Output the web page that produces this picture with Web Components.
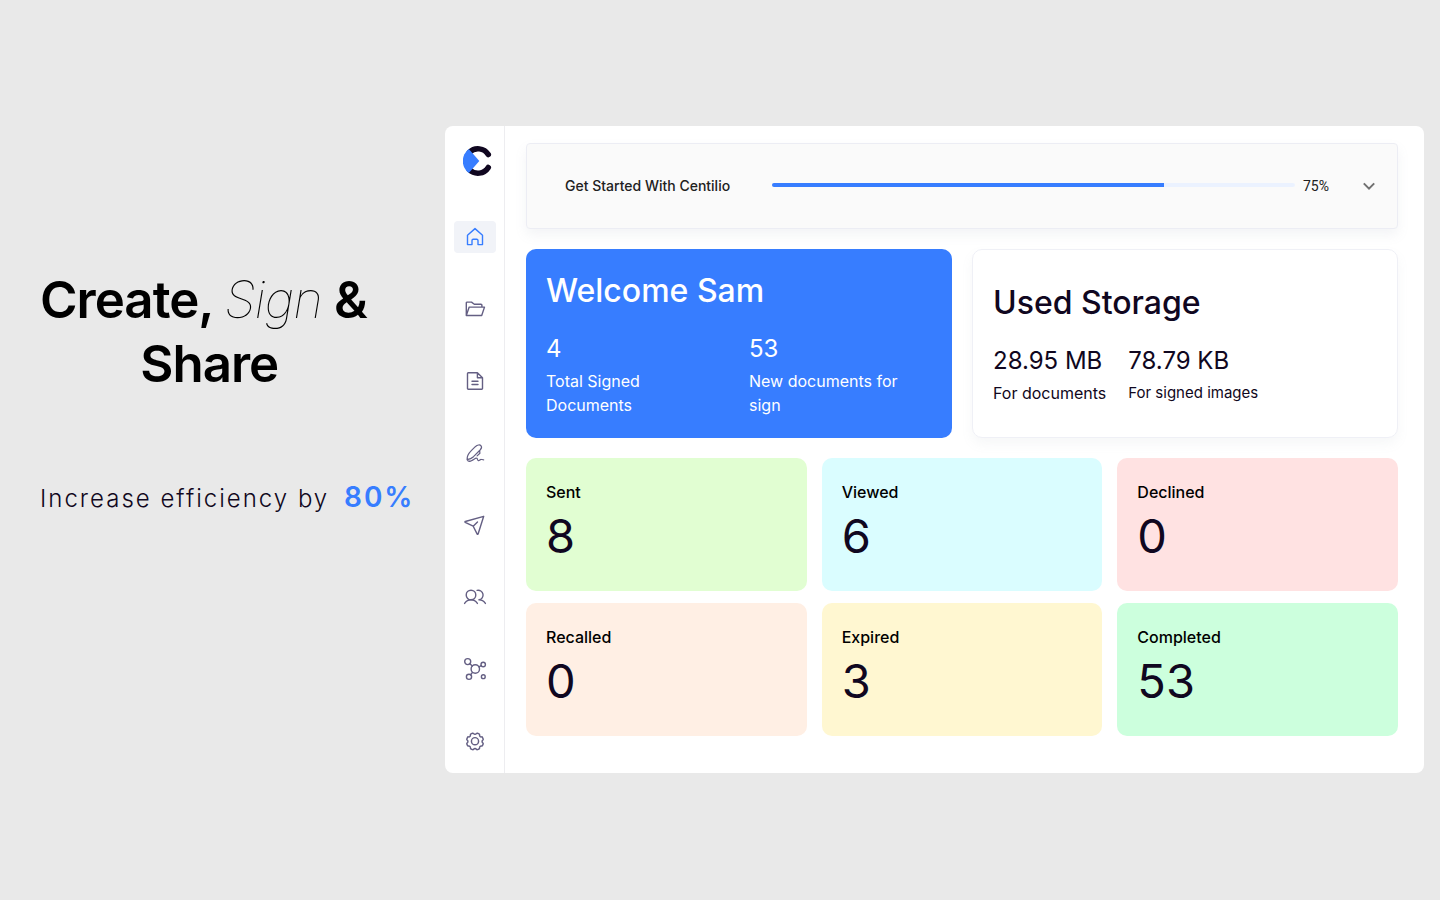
<!DOCTYPE html>
<html lang="en">
<head>
<meta charset="utf-8">
<meta name="viewport" content="width=device-width, initial-scale=1">
<title>Centilio</title>
<style>
  html { min-height: 100%; background: #e9e9e9; }
  body { margin: 0; font-family: Inter, sans-serif; color: #100720; }
</style>
</head>
<body>
<promo-page>
  <promo-hero slot="hero"></promo-hero>
  <app-panel>
    <side-bar slot="side">
      <nav-link href="#home" label="Home" active>
        <svg width="24" height="24" viewBox="0 0 24 24"><path d="M4.500 10.200 12 3.600l7.500 6.600V19.600H15v-4.100a1.200 1.200 0 0 0-1.200-1.200h-3.600A1.200 1.200 0 0 0 9 15.500v4.100H4.500z"/></svg>
      </nav-link>
      <nav-link href="#folders" label="Folders">
        <svg width="24" height="24" viewBox="0 0 24 24"><path d="M3.300 18.500V6a.9.9 0 0 1 .9-.9h4.300L11.300 7.300h6.700a.9.900 0 0 1 .9.900v1.900M3.300 18.500l2.900-8.400h15.300l-2.800 8.400z"/></svg>
      </nav-link>
      <nav-link href="#documents" label="Documents">
        <svg width="24" height="24" viewBox="0 0 24 24"><path d="M14.400 3.700H5.300a.8.8 0 0 0-.8.8v15a.8.800 0 0 0 .8.800h13.400a.8.800 0 0 0 .8-.8V8.700zM14.400 3.700v5h5.100M9 12.300h6M9 15.500h6"/></svg>
      </nav-link>
      <nav-link href="#signatures" label="Signatures">
        <svg width="24" height="24" viewBox="0 0 24 24" style="stroke-width:1.200"><path d="M4.100 18.100c-.4-3.300 1.200-6 4.200-9l4-4c2.200-2 4.600-2.200 5.600-1.100s.8 2.700-.8 4.400l-6.600 6.700c-1.700 1.600-3.700 2.500-6.400 3zM16.700 9.300l.2 2.400-2.800 2.600M4.100 18.100c.9 1.600 2.800 1.900 4.800.8 1.900-1 3.600-2.500 4.700-2.300 1.300.2.500 2.100 1.700 2.400 1.300.3 1.700-1.400 2.900-1.300.8 0 1.200.5 2.500.5" transform="translate(0 .6)"/></svg>
      </nav-link>
      <nav-link href="#send" label="Send">
        <svg width="24" height="24" viewBox="0 0 24 24"><path d="M20.700 3.300 2.300 8.500a.5.500 0 0 0-.1.900l8 3.800 4 7.900a.5.500 0 0 0 .9-.1zM10.200 13.200l4.300-4.300"/></svg>
      </nav-link>
      <nav-link href="#contacts" label="Contacts">
        <svg width="24" height="24" viewBox="0 0 24 24"><circle cx="8" cy="10" r="4.800"/><path d="M1.600 18.400c1.500-2.200 3.600-3.600 6.400-3.600s4.900 1.400 6.400 3.600M14.100 5.400a4.800 4.800 0 1 1 1.900 9.400c2.800 0 4.900 1.400 6.400 3.600"/></svg>
      </nav-link>
      <nav-link href="#integrations" label="Integrations">
        <svg width="24" height="24" viewBox="0 0 24 24"><circle cx="12.300" cy="12" r="4.200"/><circle cx="4.700" cy="4.600" r="3"/><circle cx="6" cy="19.800" r="2.600"/><circle cx="20.200" cy="7.500" r="2.200"/><circle cx="20.300" cy="19.700" r="1.900"/><path d="m6.900 6.700 2.400 2.400M7.600 17.700l1.900-2.300M16 9.900l2.200-1.300"/></svg>
      </nav-link>
      <nav-link href="#settings" label="Settings">
        <svg width="22" height="22" viewBox="0 0 24 24" style="stroke-width:1.600"><circle cx="12" cy="12.200" r="3.900"/><path d="M9.300 3.600c.5-.2.900 0 1.200.4.700 1 2.300 1 3 0 .3-.4.700-.6 1.200-.4l1.700.7c.5.200.7.600.6 1.100-.2 1.200.9 2.400 2.100 2.100.5-.1.900.1 1.100.6l.7 1.700c.2.500 0 .9-.4 1.200-1 .7-1 2.300 0 3 .4.300.6.700.4 1.200l-.7 1.700c-.2.500-.6.700-1.100.6-1.200-.2-2.300.9-2.100 2.100.1.500-.1.900-.6 1.100l-1.700.7c-.5.200-.9 0-1.200-.4-.7-1-2.300-1-3 0-.3.400-.7.600-1.200.4l-1.700-.7c-.5-.2-.7-.6-.6-1.100.2-1.200-.9-2.300-2.100-2.100-.5.100-.9-.1-1.100-.6l-.7-1.700c-.2-.5 0-.9.400-1.200 1-.7 1-2.300 0-3-.4-.3-.6-.7-.4-1.200l.7-1.700c.2-.5.600-.7 1.100-.6 1.200.3 2.300-.9 2.100-2.100-.1-.5.100-.9.600-1.100z"/></svg>
      </nav-link>
    </side-bar>
    <start-banner value="75">Get Started With Centilio</start-banner>
    <card-row>
      <summary-card tone="brand" heading="Welcome Sam">
        <stat-item value="4">Total Signed Documents</stat-item>
        <stat-item value="53">New documents for sign</stat-item>
      </summary-card>
      <summary-card heading="Used Storage">
        <stat-item value="28.95 MB">For documents</stat-item>
        <stat-item value="78.79 KB" compact>For signed images</stat-item>
      </summary-card>
    </card-row>
    <tile-grid>
      <count-tile value="8" style="--tile:#e1fed2">Sent</count-tile>
      <count-tile value="6" style="--tile:#dafdff">Viewed</count-tile>
      <count-tile value="0" style="--tile:#ffe2e2">Declined</count-tile>
      <count-tile value="0" style="--tile:#ffefe4">Recalled</count-tile>
      <count-tile value="3" style="--tile:#fff7d1">Expired</count-tile>
      <count-tile value="53" style="--tile:#ccffdd">Completed</count-tile>
    </tile-grid>
  </app-panel>
</promo-page>
<script>
function define(name, render) {
  customElements.define(name, class extends HTMLElement {
    connectedCallback() {
      if (this.shadowRoot) return;
      this.attachShadow({ mode: 'open' }).innerHTML = render(this);
    }
  });
}
define('promo-page', () => `
  <style>
    :host { display: grid; grid-template-columns: 445fr 979fr; align-content: center; min-height: 100vh; padding: 0 16px 1px 0; box-sizing: border-box; }
  </style>
  <slot name="hero"></slot><slot></slot>`);
define('promo-hero', () => `
  <style>
    :host { display: block; padding: 142px 0 0 40px; }
    h1 { margin: 0; width: max-content; font-size: 51px; line-height: 64px; font-weight: 600; letter-spacing: -1px; text-align: center; color: #000; }
    em { font-weight: 100; }
    p { margin: 81px 0 0; font-size: 24px; line-height: 40px; font-weight: 300; letter-spacing: 2px; white-space: nowrap; }
    strong { margin-left: 6px; font-size: 28px; font-weight: 600; color: #377dff; }
  </style>
  <h1>Create, <em>Sign</em> &amp;&nbsp;<br>Share</h1>
  <p>Increase efficiency by <strong>80%</strong></p>`);
define('app-panel', () => `
  <style>
    :host { display: flex; background: #fff; border-radius: 8px; overflow: hidden; }
    main { flex: 1; min-width: 0; padding: 17px 26px 36px 21px; display: flex; flex-direction: column; gap: 20px; }
  </style>
  <slot name="side"></slot><main><slot></slot></main>`);
define('side-bar', () => `
  <style>
    :host { display: flex; flex-direction: column; align-items: center; width: 59px; padding: 20px 0 16px; border-right: 1px solid #ededf0; flex: none; }
    .logo { display: block; margin: 0 0 45px 7px; }
    .logo svg { display: block; }
    nav { display: flex; flex-direction: column; gap: 40px; }
  </style>
  <a class="logo" href="#" aria-label="Centilio"><svg width="30" height="30" viewBox="0 0 30 30">
    <path d="M6.370 6.370A12.200 12.200 0 0 1 25.300 8.500M6.370 23.630A12.200 12.200 0 0 0 25.300 21.500" fill="none" stroke="#100720" stroke-width="5.500" stroke-linecap="round"/>
    <path d="M5.800 3 16.300 15 5.800 27A15 15 0 0 1 5.800 3z" fill="#377dff"/>
  </svg></a>
  <nav aria-label="Main"><slot></slot></nav>`);
define('nav-link', el => `
  <style>
    :host { display: block; --ink: #645f83; }
    :host([active]) { --ink: #377dff; --bg: #f1f3f8; }
    a { display: flex; align-items: center; justify-content: center; width: 42px; height: 32px; border-radius: 4px; background: var(--bg, transparent); }
    ::slotted(svg) { fill: none; stroke: var(--ink); stroke-width: 1.400; stroke-linejoin: round; stroke-linecap: round; overflow: visible; }
  </style>
  <a href="${el.getAttribute('href')}" aria-label="${el.getAttribute('label')}"><slot></slot></a>`);
define('start-banner', el => `
  <style>
    :host { display: flex; align-items: center; height: 86px; box-sizing: border-box; padding: 0 16px 0 38px; background: #fafafa; border: 1px solid #ecedf4; border-radius: 4px; box-shadow: 0 6px 12px rgba(140, 152, 164, .1); font-size: 14px; line-height: 20px; color: #212121; }
    label { font-weight: 500; margin-right: 42px; white-space: nowrap; }
    progress { flex: 1; min-width: 0; height: 4px; appearance: none; border: 0; border-radius: 2px; overflow: hidden; background: #ebf2ff; margin: 0 8px 2px 0; }
    progress::-webkit-progress-bar { background: #ebf2ff; }
    progress::-webkit-progress-value { background: #377dff; }
    span { font-family: Roboto, sans-serif; }
    button { display: flex; align-items: center; justify-content: center; width: 24px; height: 24px; margin-left: 28px; padding: 0; border: 0; background: none; }
  </style>
  <label for="bar"><slot></slot></label>
  <progress id="bar" max="100" value="${el.getAttribute('value')}"></progress>
  <span>${el.getAttribute('value')}%</span>
  <button aria-label="Expand"><svg width="24" height="24" viewBox="0 0 24 24"><path d="m6.800 9.400 5.200 5.200 5.200-5.200" fill="none" stroke="#707070" stroke-width="2"/></svg></button>`);
define('card-row', () => `
  <style>:host { display: grid; grid-template-columns: 1fr 1fr; gap: 20px; }</style><slot></slot>`);
define('summary-card', el => `
  <style>
    :host { display: flex; flex-direction: column; justify-content: center; box-sizing: border-box; min-height: 189px; padding: 20px; border: 1px solid #eff0f6; border-radius: 10px; box-shadow: 0 6px 12px rgba(140, 152, 164, .08); }
    :host([tone=brand]) { background: #377dff; border: 0; box-shadow: none; color: #fff; --cols: 1fr 1fr; --gap: 20px; }
    h2 { margin: 0 0 18px; font-size: 32px; line-height: 40px; font-weight: 500; }
    div { display: grid; grid-template-columns: var(--cols, max-content max-content); gap: var(--gap, 22px); }
  </style>
  <h2>${el.getAttribute('heading')}</h2><div><slot></slot></div>`);
define('stat-item', el => `
  <style>
    :host { display: block; font-size: 16px; line-height: 24px; }
    :host([compact]) { font-size: 15px; }
    b { display: block; font-size: 24px; line-height: 40px; font-weight: 400; }
    span { display: block; }
  </style>
  <b>${el.getAttribute('value')}</b><span><slot></slot></span>`);
define('tile-grid', () => `
  <style>:host { display: grid; grid-template-columns: repeat(3, 1fr); gap: 12px 15px; }</style><slot></slot>`);
define('count-tile', el => `
  <style>
    :host { display: block; box-sizing: border-box; min-height: 133px; padding: 22px 20px; background: var(--tile); border-radius: 10px; }
    h3 { margin: 0 0 2px; font-size: 16px; line-height: 24px; font-weight: 500; color: #000; }
    p { margin: 0; font-size: 47px; line-height: 60px; }
  </style>
  <h3><slot></slot></h3><p>${el.getAttribute('value')}</p>`);
</script>
</body>
</html>
